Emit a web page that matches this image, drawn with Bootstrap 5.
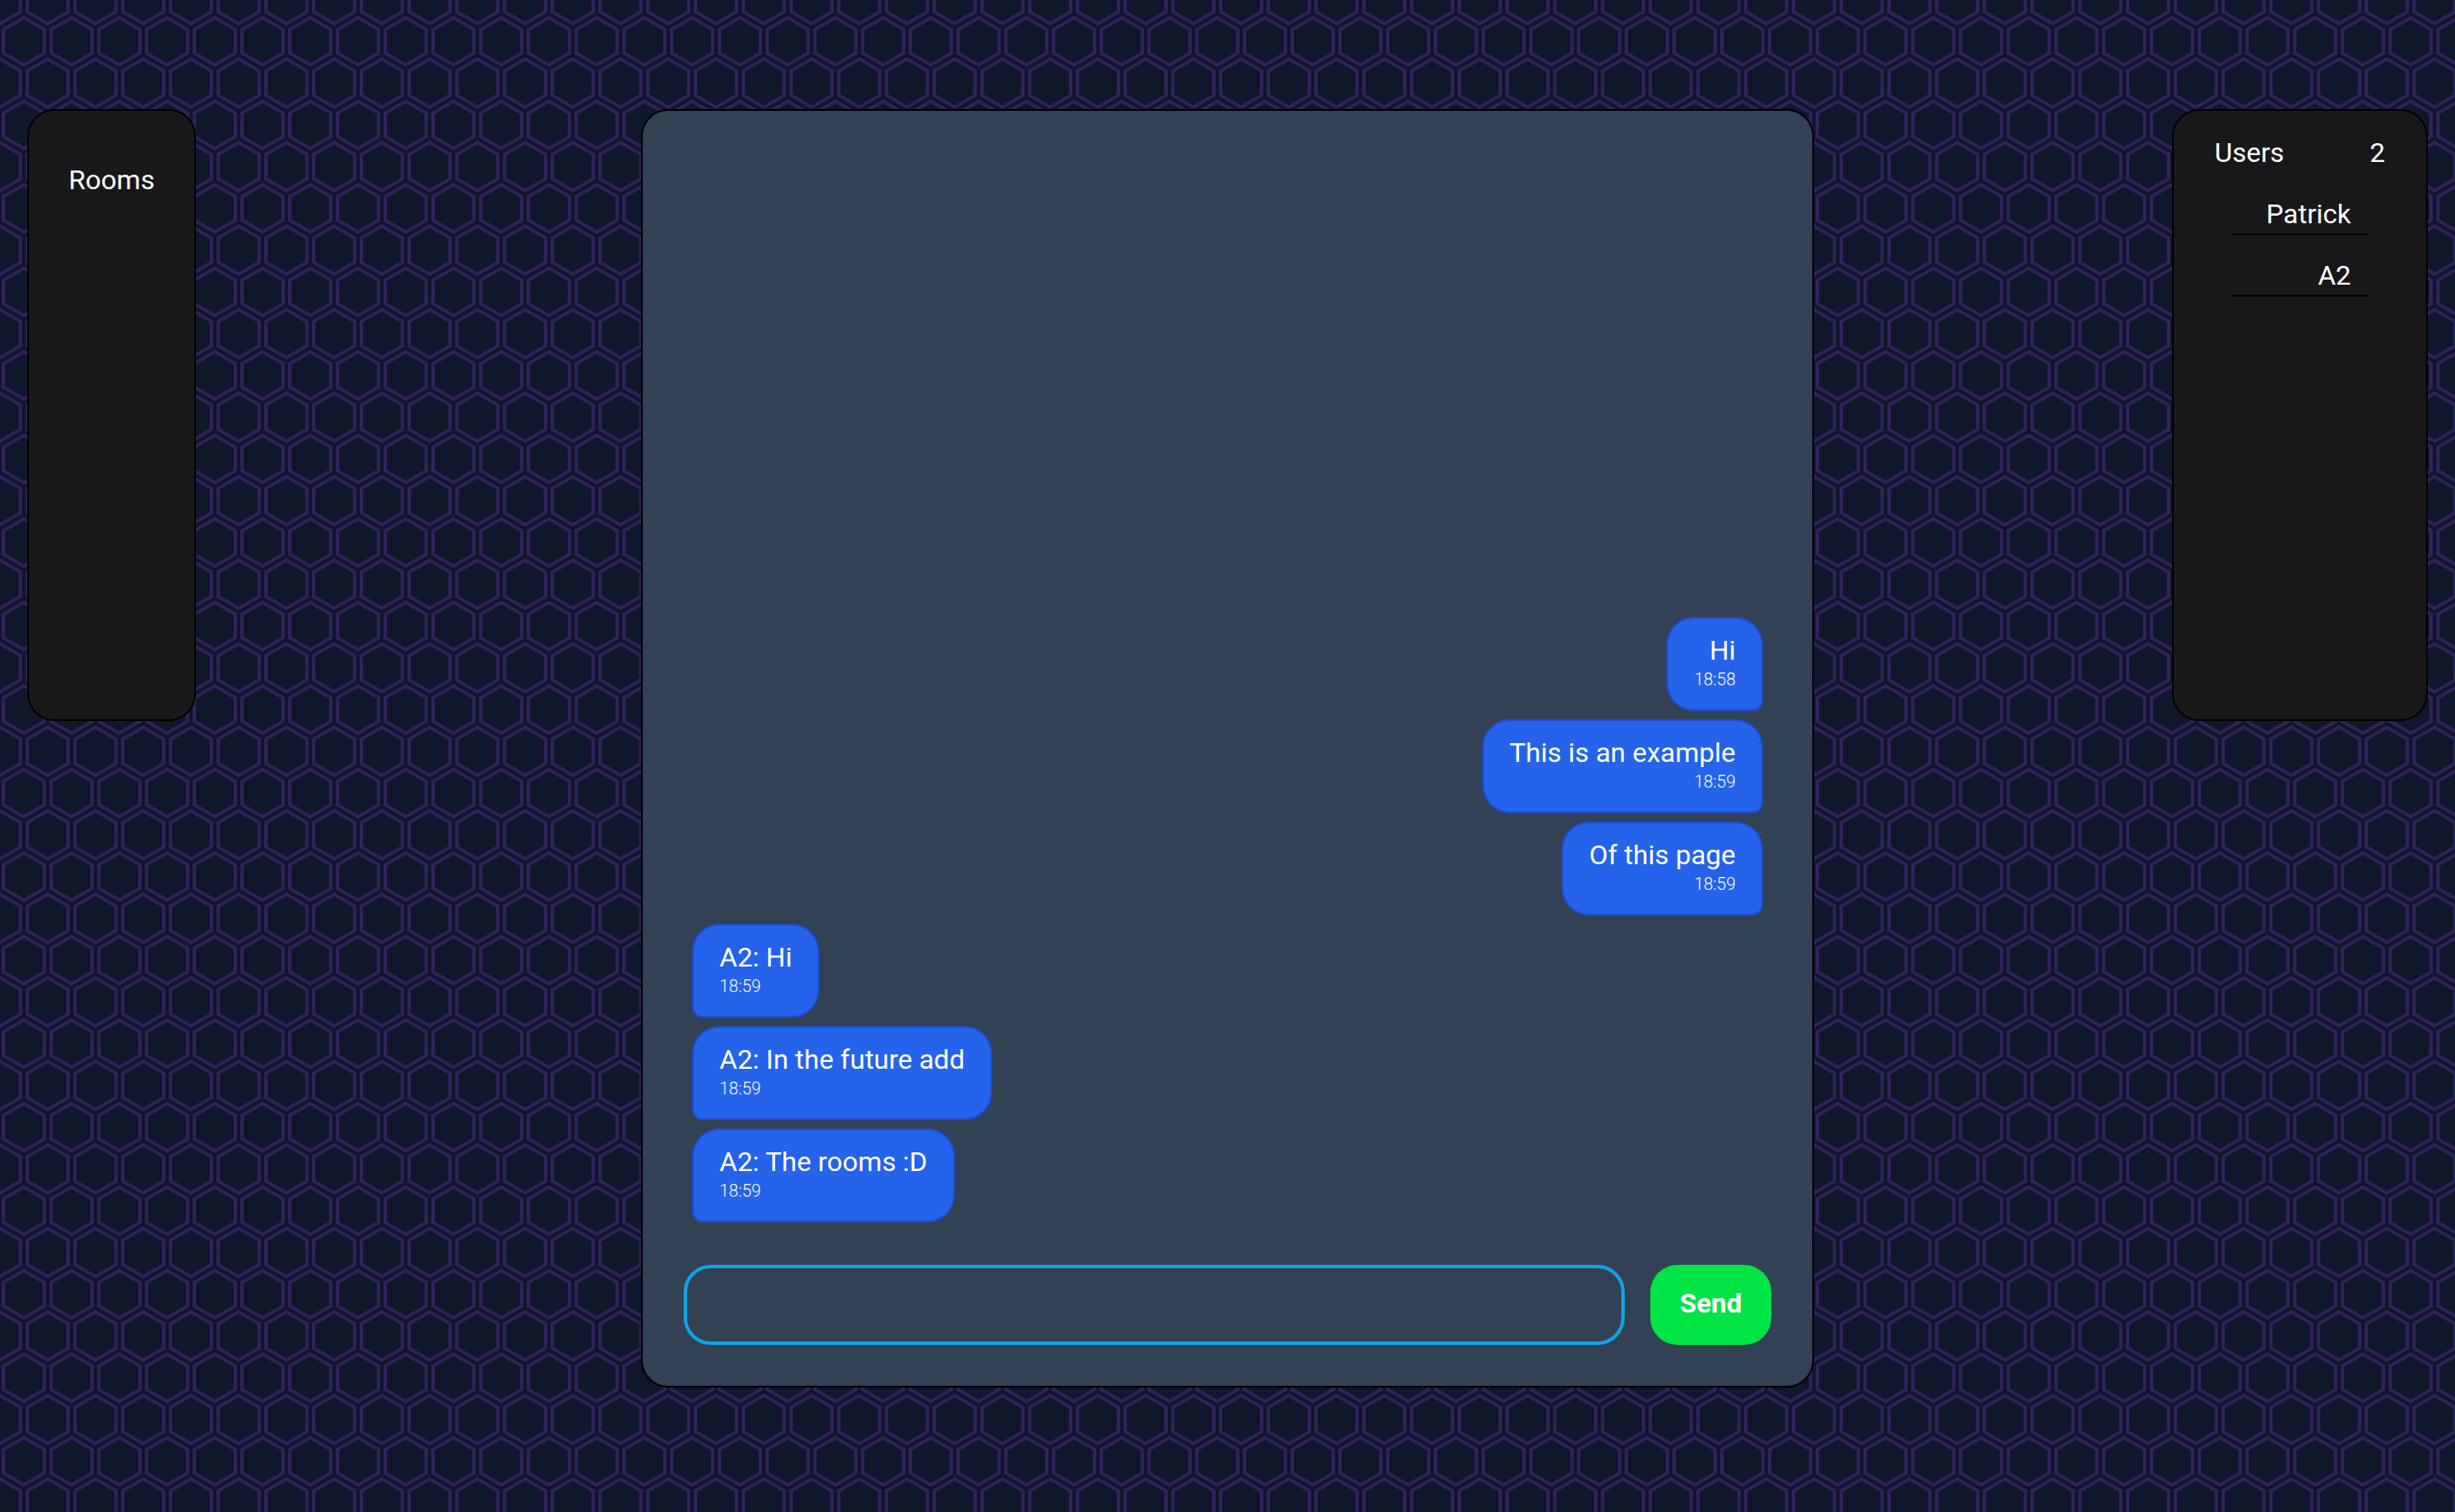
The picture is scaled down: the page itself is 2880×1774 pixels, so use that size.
<!DOCTYPE html>
<html lang="en">
<head>
<meta charset="utf-8">
<meta name="viewport" content="width=device-width, initial-scale=1">
<title>Chat</title>
<link href="https://cdn.jsdelivr.net/npm/bootstrap@5.3.0/dist/css/bootstrap.min.css" rel="stylesheet">
<style>
  body {
    font-family: Roboto, "Liberation Sans", sans-serif;
    font-size: 32px;
    line-height: 46px;
    color: #fff;
    background-color: #0f172a;
    background-image: url("data:image/svg+xml,%3Csvg xmlns='http://www.w3.org/2000/svg' width='56' height='98' viewBox='0 0 28 49'%3E%3Cpath fill='%2331225b' fill-rule='evenodd' d='M13.99 9.25l13 7.5v15l-13 7.5L1 31.75v-15l12.99-7.5zM3 17.9v12.7l10.99 6.34 11-6.35V17.9l-11-6.34L3 17.9zM0 15l12.98-7.5V0h-2v6.35L0 12.69v2.3zm0 18.5L12.98 41v8h-2v-6.85L0 35.81v-2.3zM15 0v7.5L27.99 15H28v-2.31h-.01L17 6.35V0h-2zm0 49v-8l12.99-7.5H28v2.31h-.01L17 42.15V49h-2z'/%3E%3C/svg%3E");
  }
  .chat-layout {
    display: grid;
    grid-template-columns: 1fr minmax(0, 1376px) 1fr;
    padding: 128px 32px 146px;
  }
  .panel { border: 2px solid #000; border-radius: 32px; }
  .side-panel { background: #18181b; min-height: 718px; }
  .rooms-panel { width: 198px; padding-top: 58px; }
  .users-panel { width: 300px; padding: 26px 48px; }
  .user-list { gap: 24px; margin-top: 26px; padding: 0 20px; }
  .user-item { border-bottom: 2px solid #000; padding-right: 20px; }
  .chat-panel { background: #334155; padding: 48px; }
  .message-list { gap: 10px; padding: 0 10px 50px; }
  .bubble {
    border: 2px solid #1d4ed8;
    background: #2563eb;
    border-radius: 32px;
    padding: 16px 30px 22px;
    line-height: 42px;
  }
  .bubble-mine { border-bottom-right-radius: 12px; }
  .bubble-theirs { border-bottom-left-radius: 12px; }
  .bubble time { font-size: 20px; font-weight: 300; line-height: 26px; }
  .composer { gap: 30px; }
  .composer-input, .composer-input:focus {
    height: 94px;
    padding: 0 32px;
    font-size: 32px;
    color: #fff;
    background: transparent;
    border: 4px solid #0ea5e9;
    border-radius: 32px;
    box-shadow: none;
  }
  .composer-send, .composer-send:hover {
    width: 142px;
    padding-bottom: 10px;
    font-size: 32px;
    color: #fff;
    background: #00e446;
    border: 0;
    border-radius: 32px;
  }
</style>
<script src="https://cdn.jsdelivr.net/npm/bootstrap@5.3.0/dist/js/bootstrap.bundle.min.js"></script>
</head>
<body>
<div class="chat-layout min-vh-100">
  <aside class="panel side-panel rooms-panel text-center align-self-start">Rooms</aside>

  <main class="panel chat-panel d-flex flex-column">
    <div class="message-list d-flex flex-column justify-content-end flex-grow-1">
      <div class="bubble bubble-mine align-self-end text-end">Hi<time class="d-block">18:58</time></div>
      <div class="bubble bubble-mine align-self-end text-end">This is an example<time class="d-block">18:59</time></div>
      <div class="bubble bubble-mine align-self-end text-end">Of this page<time class="d-block">18:59</time></div>
      <div class="bubble bubble-theirs align-self-start">A2: Hi<time class="d-block">18:59</time></div>
      <div class="bubble bubble-theirs align-self-start">A2: In the future add<time class="d-block">18:59</time></div>
      <div class="bubble bubble-theirs align-self-start">A2: The rooms :D<time class="d-block">18:59</time></div>
    </div>
    <form class="composer d-flex">
      <input type="text" class="form-control composer-input" aria-label="Message">
      <button type="button" class="btn composer-send fw-bold flex-shrink-0">Send</button>
    </form>
  </main>

  <aside class="panel side-panel users-panel align-self-start ms-auto">
    <div class="d-flex justify-content-between"><span>Users</span><span>2</span></div>
    <ul class="user-list list-unstyled d-flex flex-column mb-0">
      <li class="user-item text-end">Patrick</li>
      <li class="user-item text-end">A2</li>
    </ul>
  </aside>
</div>
</body>
</html>
